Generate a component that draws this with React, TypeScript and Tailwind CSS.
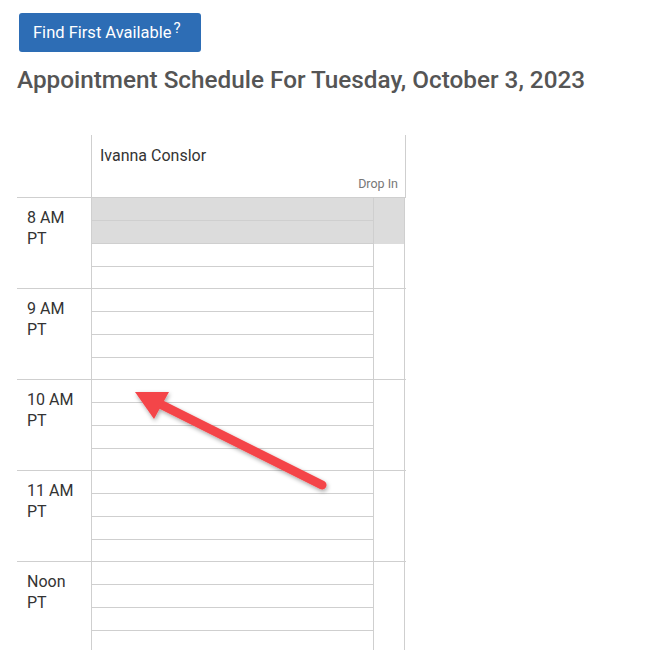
import React from 'react';

const hours = [
  { label: '8 AM', blocked: 2 },
  { label: '9 AM', blocked: 0 },
  { label: '10 AM', blocked: 0 },
  { label: '11 AM', blocked: 0 },
  { label: 'Noon', blocked: 0 },
];

function HourRow({ label, blocked }: { label: string; blocked: number }) {
  return (
    <div className="flex h-[91px] border-b border-[#cfcfcf]">
      <div className="w-[75px] shrink-0 border-r border-[#cfcfcf] pl-[10px] pt-[9px] text-[16px] leading-[21px] text-[#333]">
        <div>{label}</div>
        <div>PT</div>
      </div>
      <div className="w-[282px] shrink-0 border-r border-[#cfcfcf]">
        {[0, 1, 2, 3].map((i) => (
          <div
            key={i}
            className={`${i < 3 ? 'h-[23px] border-b border-[#cfcfcf]' : 'h-[21px]'} ${i < blocked ? 'bg-[#dcdcdc]' : ''}`}
          />
        ))}
      </div>
      <div className="w-[31px] shrink-0 border-r border-[#cfcfcf]">
        {blocked > 0 && <div className="h-[46px] bg-[#dcdcdc]" />}
      </div>
    </div>
  );
}

export default function App() {
  return (
    <div className="relative h-[650px] w-[650px] overflow-hidden bg-white pt-[13px] pl-[17px] font-['Roboto',sans-serif]">
      <button className="ml-[2px] flex h-[39px] w-[182px] items-start rounded-[3px] bg-[#2d6db5] pl-[14px] pt-[10px] text-[16.5px] leading-[20px] text-white">
        Find First Available
        <span className="ml-[2px] -mt-[5px] text-[15px]">?</span>
      </button>

      <h1 className="mt-[13px] text-[24.3px] font-medium leading-[30px] text-[#555]">
        Appointment Schedule For Tuesday, October 3, 2023
      </h1>

      {/* Schedule grid */}
      <div className="mt-[40px] w-[389px]">
        <div className="flex h-[63px] border-b border-[#cfcfcf]">
          <div className="w-[75px] shrink-0 border-r border-[#cfcfcf]" />
          <div className="flex w-[314px] shrink-0 flex-col border-r border-[#cfcfcf] pl-[8px] pr-[7px] pt-[11px]">
            <div className="text-[16px] leading-[20px] text-[#333]">Ivanna Conslor</div>
            <div className="mt-[10px] text-right text-[12.5px] leading-[16px] text-[#777]">Drop In</div>
          </div>
        </div>
        {hours.map((h) => (
          <HourRow key={h.label} label={h.label} blocked={h.blocked} />
        ))}
      </div>

      {/* Annotation arrow */}
      <svg className="absolute left-0 top-0" width="650" height="650" style={{ pointerEvents: 'none' }}>
        <defs>
          <filter id="sh" x="-20%" y="-20%" width="140%" height="140%">
            <feDropShadow dx="1" dy="2" stdDeviation="2" floodColor="#000" floodOpacity="0.35" />
          </filter>
        </defs>
        <g filter="url(#sh)">
          <line x1="322" y1="485" x2="158" y2="403" stroke="#f44448" strokeWidth="9" strokeLinecap="round" />
          <polygon points="135,392 169,392 154,419" fill="#f44448" />
        </g>
      </svg>
    </div>
  );
}
